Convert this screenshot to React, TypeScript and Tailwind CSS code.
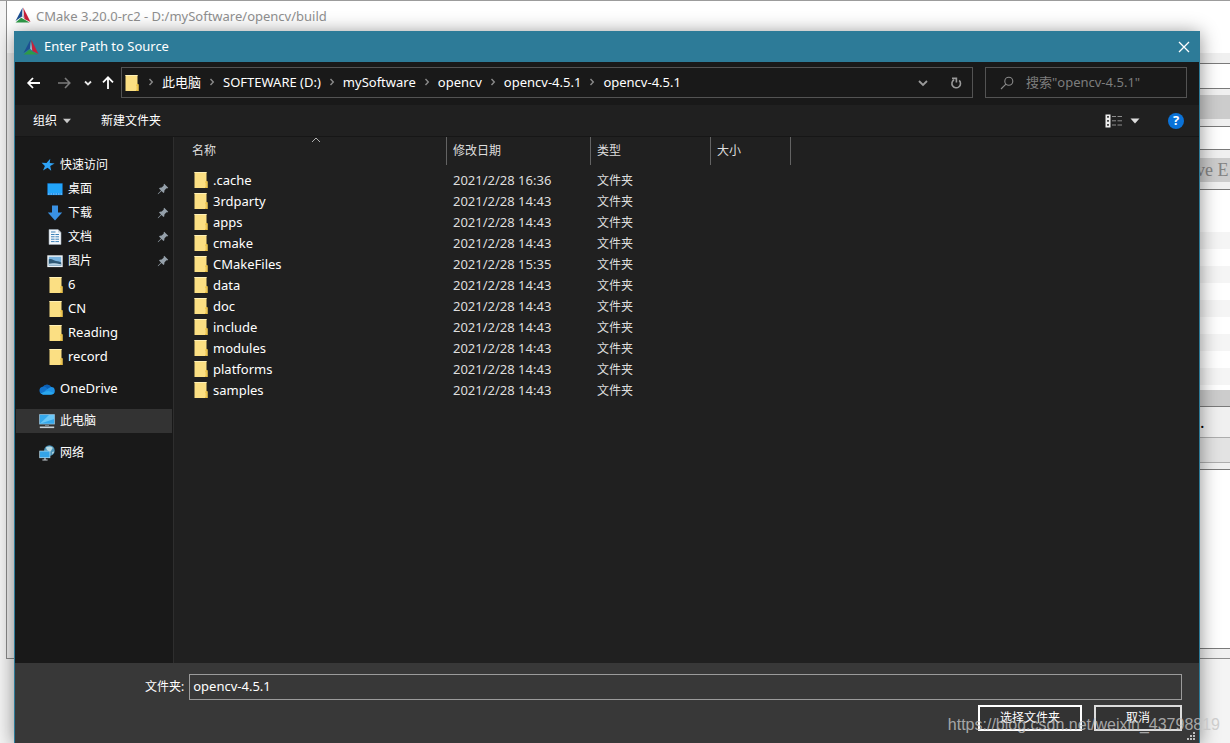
import { Fragment, type ReactNode } from "react";

const folders = [
  { name: ".cache", date: "2021/2/28 16:36" },
  { name: "3rdparty", date: "2021/2/28 14:43" },
  { name: "apps", date: "2021/2/28 14:43" },
  { name: "cmake", date: "2021/2/28 14:43" },
  { name: "CMakeFiles", date: "2021/2/28 15:35" },
  { name: "data", date: "2021/2/28 14:43" },
  { name: "doc", date: "2021/2/28 14:43" },
  { name: "include", date: "2021/2/28 14:43" },
  { name: "modules", date: "2021/2/28 14:43" },
  { name: "platforms", date: "2021/2/28 14:43" },
  { name: "samples", date: "2021/2/28 14:43" },
];

const crumbs = [
  "此电脑",
  "SOFTEWARE (D:)",
  "mySoftware",
  "opencv",
  "opencv-4.5.1",
  "opencv-4.5.1",
];

function CMakeLogo() {
  return (
    <svg viewBox="0 0 16 16" className="size-4 shrink-0">
      <path d="M7.6 0.5 L0.5 14 L7 9.6 Z" fill="#1d4f91" />
      <path d="M8.2 0.5 L15.5 15 L9.4 12 Z" fill="#c8203a" />
      <path d="M0.5 15.5 L6.2 10.8 L14.6 15.5 Z" fill="#2e9a48" />
      <path d="M7.9 2.5 L7.2 9.8 L9.2 11.6 Z" fill="#aebccb" />
    </svg>
  );
}

function FolderIcon() {
  return (
    <svg viewBox="0 0 14 16" className="h-4 w-3.5 shrink-0">
      <path d="M0.5 0 H12.5 V9 L13.5 9.5 V16 H0.5 Z" fill="#fbdf83" />
      <path d="M0.5 0 H12.5 V1 H0.5 Z" fill="#fff0b5" />
      <path d="M11 16 V10 L12.5 8.8 L13.5 9.5 V16 Z" fill="#e9bd3f" />
      <path d="M11.8 15 V10.5" stroke="#fdeaa0" strokeWidth="0.7" />
    </svg>
  );
}

function StarIcon() {
  return (
    <svg viewBox="0 0 16 16" className="size-4 shrink-0">
      <path
        d="M11.3 1.8 L10.7 6.1 L15.6 6.6 L11.2 9 L12.2 13.8 L8.6 10.7 L4 13.6 L5.9 9 L2.6 5.8 L7.5 6 Z"
        fill="#2ea3f7"
      />
    </svg>
  );
}

function DesktopIcon() {
  return (
    <svg viewBox="0 0 16 16" className="size-4 shrink-0">
      <rect x="0.4" y="2.3" width="15.2" height="11.8" fill="#1b8fee" />
      <rect x="1" y="3" width="14" height="9" fill="#22a5fb" />
      <path d="M1 13 H15" stroke="#8fd1ff" strokeWidth="1" strokeDasharray="1.5 1" />
    </svg>
  );
}

function DownloadIcon() {
  return (
    <svg viewBox="0 0 16 16" className="size-4 shrink-0">
      <path d="M5 0.5 H11 V7.5 H15.2 L8 15.5 L0.8 7.5 H5 Z" fill="#3a92e4" />
    </svg>
  );
}

function DocumentIcon() {
  return (
    <svg viewBox="0 0 16 16" className="size-4 shrink-0">
      <path d="M2 0.5 H11 L14 3.5 V15.5 H2 Z" fill="#f4f8fb" stroke="#9aa9b5" strokeWidth="0.6" />
      <path d="M11 0.5 V3.5 H14" fill="#c3d0da" />
      <path d="M4 5.5 H12 M4 7.8 H12 M4 10.2 H12 M4 12.6 H12" stroke="#3c82b8" />
      <path d="M4 3 H8.5" stroke="#3c82b8" />
      <path d="M8 5 V13" stroke="#f4f8fb" strokeWidth="0.8" />
    </svg>
  );
}

function PictureIcon() {
  return (
    <svg viewBox="0 0 16 16" className="size-4 shrink-0">
      <rect x="0.3" y="2.3" width="15.4" height="11.8" fill="#eef3f6" />
      <rect x="1.8" y="3.8" width="12.4" height="8.8" fill="#78b3df" />
      <path d="M1.8 6.5 C5 5 6.5 8 9 8 S13 9 14.2 9.5 V12.6 H1.8 Z" fill="#2f5976" />
      <path d="M1.8 10.8 C5 9.5 10 10.5 14.2 11.2 V12.6 H1.8 Z" fill="#b9d4e6" />
    </svg>
  );
}

function CloudIcon() {
  return (
    <svg viewBox="0 0 16 16" className="size-4 shrink-0">
      <path d="M3.6 6.5 A4.9 4.9 0 0 1 12.4 6 L8 10 Z" fill="#0c5fb3" />
      <path d="M4 13.4 A3.9 3.9 0 0 1 3.6 5.7 C6 5.2 7.5 6.8 8.7 8 L12 13.4 Z" fill="#1273cd" />
      <path d="M11.8 6 A3.7 3.7 0 0 1 12.4 13.4 L3.6 13.4 C5.5 9.5 9 7.5 11.8 6 Z" fill="#1f93e6" />
      <path d="M1.6 12.5 C5 10.8 7.5 9.8 9.5 9.9 L15 12 A3 3 0 0 1 12.4 13.4 H4 Z" fill="#2aa7ee" />
    </svg>
  );
}

function ComputerIcon() {
  return (
    <svg viewBox="0 0 16 16" className="size-4 shrink-0">
      <rect x="0.2" y="1.2" width="15.6" height="10.2" fill="#9ec7e0" />
      <rect x="0.9" y="1.9" width="14.2" height="8.8" fill="#36a9ec" />
      <path d="M0.9 10.7 L10 1.9 H15.1 V6 Z" fill="#6cc8f7" />
      <path d="M6 12.4 H10" stroke="#7d8c96" />
      <path d="M0.8 14.3 H15.2" stroke="#c7d0d6" strokeWidth="1.6" />
    </svg>
  );
}

function NetworkIcon() {
  return (
    <svg viewBox="0 0 16 16" className="size-4 shrink-0">
      <circle cx="10.4" cy="5.6" r="5.3" fill="#4b93b8" />
      <path d="M7 2.2 C10 1 12.5 1.2 13.8 3 C12.5 4.2 12.6 6 11.3 6.4 C9 6 7 5 7 2.2 Z" fill="#b8dbe4" />
      <path d="M13.2 7 L15.3 6.5 L13.5 9.5 Z" fill="#c6e2e8" />
      <rect x="0.3" y="5.7" width="11" height="7.4" fill="#b4d9ec" />
      <rect x="1" y="6.4" width="9.6" height="6" fill="#35a4e8" />
      <path d="M3.4 15 H8.6 M6 13 V15" stroke="#c7d0d6" strokeWidth="1.2" />
    </svg>
  );
}

function PinIcon() {
  return (
    <svg viewBox="0 0 12 12" className="size-3 shrink-0">
      <path
        d="M7.2 0.8 L11.2 4.8 L10.2 5.4 L9.4 5.2 L7.4 7.4 L7.3 9.3 L6.5 10 L4.5 7.9 L1.4 11 L0.8 11.2 L1 10.6 L4 7.5 L2 5.5 L2.8 4.7 L4.7 4.6 L6.8 2.6 L6.6 1.7 Z"
        fill="#95a0aa"
      />
    </svg>
  );
}

function Chevron() {
  return (
    <svg viewBox="0 0 22 10" className="h-2.5 w-[22px] shrink-0">
      <path d="M9.5 2 L12.3 5 L9.5 8" fill="none" stroke="#8a8a8a" strokeWidth="1.4" />
    </svg>
  );
}

type SideItemProps = {
  icon: ReactNode;
  label: string;
  latin?: boolean;
  nested?: boolean;
  pinned?: boolean;
  active?: boolean;
};

function SideItem({ icon, label, latin, nested, pinned, active }: SideItemProps) {
  return (
    <li className="h-6 px-px">
      <a
        href="#"
        className={`flex h-6 items-center gap-[5px] pr-[3px] ${nested ? "pl-[31px]" : "pl-[23px]"} ${active ? "bg-[#333333]" : ""}`}
      >
        {icon}
        <span className={`flex-1 whitespace-nowrap ${latin ? "text-[13px]" : "text-xs"}`}>
          {label}
        </span>
        {pinned && <PinIcon />}
      </a>
    </li>
  );
}

/* Main CMake window, mostly covered by the dialog */
function CMakeWindow() {
  return (
    <div className="absolute left-1.5 right-0 top-0 border-b border-l border-[#8c8c8c] bg-[#f0f0f0]">
      <div className="flex h-[52px] items-start gap-[5px] bg-white pl-2 pt-1.5 text-[13px] leading-[18px] text-[#8f8f8f]">
        <CMakeLogo />
        <span>CMake 3.20.0-rc2 - D:/mySoftware/opencv/build</span>
      </div>
      <div className="pl-8 pt-2.5">
        <div className="h-[26px] border-y border-[#7a7a7a] bg-white" />
        <div className="mt-1.5 h-6 bg-[#cccccc]" />
        <div className="mt-[7px] h-6 border-y border-[#7a7a7a] bg-white" />
        <div className="mt-2 flex h-6 items-center justify-end bg-[#cccccc]">
          <span className="w-[34px] whitespace-pre font-['Liberation_Serif',serif] text-lg text-[#838383]">
            ve E
          </span>
        </div>
        <div className="mt-[7px] border-t border-[#7a7a7a] bg-white pb-[5px] pt-[42px]">
          <div className="h-[17px] bg-[#f5f5f5]" />
          <div className="mt-[17px] h-[17px] bg-[#f5f5f5]" />
          <div className="mt-[17px] h-[17px] bg-[#f5f5f5]" />
          <div className="mt-[17px] h-[17px] bg-[#f5f5f5]" />
          <div className="mt-[17px] h-[17px] bg-[#f5f5f5]" />
        </div>
        <div className="h-4 bg-[#cccccc]" />
        <div className="flex h-8 items-center justify-end border-y border-b-[#adadad] border-t-[#7a7a7a]">
          <span className="w-[30px] font-['Liberation_Serif',serif] text-lg leading-none text-black">.</span>
        </div>
        <div className="h-[25px] border-b border-[#adadad] bg-[#e3e3e3]" />
        <div className="mt-1.5 h-[180px] border-y border-[#7a7a7a] bg-white" />
        <div className="h-[9px]" />
      </div>
    </div>
  );
}

function AddressBar() {
  return (
    <div className="flex h-[43px] items-start bg-[#191919] pl-[11px] pr-3 pt-[5px]">
      <div className="flex h-[31px] items-center">
        <button aria-label="后退" className="w-4">
          <svg viewBox="0 0 16 16" className="size-4" fill="none" stroke="#ffffff" strokeWidth="1.8">
            <path d="M2.5 8 H14 M7 3 L2.2 8 L7 13" />
          </svg>
        </button>
        <button aria-label="前进" className="ml-3.5 w-4">
          <svg viewBox="0 0 16 16" className="size-4" fill="none" stroke="#7b7b7b" strokeWidth="1.6">
            <path d="M2 8 H13.5 M9 3 L13.8 8 L9 13" />
          </svg>
        </button>
        <button aria-label="最近浏览的位置" className="ml-2.5 w-3">
          <svg viewBox="0 0 12 12" className="size-3" fill="none" stroke="#e6e6e6" strokeWidth="1.8">
            <path d="M3 4.5 L6 7.5 L9 4.5" />
          </svg>
        </button>
        <button aria-label="上移" className="ml-1.5 w-4">
          <svg viewBox="0 0 16 16" className="size-4" fill="none" stroke="#ffffff" strokeWidth="1.8">
            <path d="M8 14 V2.5 M3 7.3 L8 2.3 L13 7.3" />
          </svg>
        </button>
      </div>
      <div className="ml-[5px] flex h-[31px] min-w-0 flex-1 items-center border border-[#535353] pl-[3px]">
        <FolderIcon />
        <nav className="flex flex-1 items-center pb-0.5 pl-px">
          {crumbs.map((crumb, i) => (
            <Fragment key={i}>
              <Chevron />
              <a href="#" className="whitespace-nowrap text-[13px] leading-5">
                {crumb}
              </a>
            </Fragment>
          ))}
        </nav>
        <button aria-label="以前的位置" className="w-8">
          <svg viewBox="0 0 12 12" className="mx-auto size-3" fill="none" stroke="#9a9a9a" strokeWidth="1.8">
            <path d="M2 4 L6 8 L10 4" />
          </svg>
        </button>
        <button aria-label="刷新" className="w-[33px]">
          <svg viewBox="0 0 14 14" className="mx-auto size-3.5" fill="none" stroke="#9a9a9a" strokeWidth="1.6">
            <path d="M10.2 4.4 A4.3 4.3 0 1 1 5 3.8" />
            <path d="M3 2.4 H7.4 V6.4" />
          </svg>
        </button>
      </div>
      <label className="ml-3 flex h-[31px] w-[202px] shrink-0 items-center border border-[#535353] pl-3.5">
        <svg viewBox="0 0 14 14" className="size-3.5 shrink-0" fill="none" stroke="#8a8a8a" strokeWidth="1.1">
          <circle cx="8.8" cy="5.2" r="4" />
          <path d="M5.9 8.1 L1 13" />
        </svg>
        <input
          type="text"
          aria-label="搜索"
          placeholder={'搜索"opencv-4.5.1"'}
          className="ml-3 w-full min-w-0 bg-transparent text-[13px] outline-none placeholder:text-[#7d7d7d]"
        />
      </label>
    </div>
  );
}

function Toolbar() {
  return (
    <div className="flex h-8 items-center border-b border-[#161616] bg-[#202020] pl-[18px] pr-[15px] text-xs">
      <button className="flex items-center gap-[5px]">
        组织
        <svg viewBox="0 0 10 6" className="h-1.5 w-2.5" fill="#c9c9c9">
          <path d="M1 0.8 H9 L5 5.2 Z" />
        </svg>
      </button>
      <button className="ml-[29px]">新建文件夹</button>
      <button aria-label="更改视图" className="ml-auto flex items-center gap-[7px]">
        <svg viewBox="0 0 18 14" className="h-3.5 w-[18px]">
          <path d="M0.5 0.5 H5.5 V13.5 H0.5 Z" fill="#f0f0f0" />
          <path d="M2 2 H4 V3.8 H2 Z M2 6 H4 V7.8 H2 Z M2 10 H4 V11.8 H2 Z" fill="#4a4a4a" />
          <path
            d="M7 2.5 H11 M12.5 2.5 H17 M7 6.8 H11 M12.5 6.8 H17 M7 11 H11 M12.5 11 H17"
            stroke="#8d8d8d"
          />
        </svg>
        <svg viewBox="0 0 10 6" className="h-1.5 w-2.5" fill="#dddddd">
          <path d="M0.5 0.5 H9.5 L5 5.5 Z" />
        </svg>
      </button>
      <button
        aria-label="获取帮助"
        className="ml-7 flex size-4 items-center justify-center rounded-full bg-[#0a72d8] font-['Open_Sans',sans-serif] text-[13px] font-bold leading-none"
      >
        ?
      </button>
    </div>
  );
}

function Sidebar() {
  return (
    <aside className="w-[159px] shrink-0 border-r border-[#2e2e2e] bg-[#191919] pt-4">
      <ul>
        <SideItem icon={<StarIcon />} label="快速访问" />
        <SideItem nested pinned icon={<DesktopIcon />} label="桌面" />
        <SideItem nested pinned icon={<DownloadIcon />} label="下载" />
        <SideItem nested pinned icon={<DocumentIcon />} label="文档" />
        <SideItem nested pinned icon={<PictureIcon />} label="图片" />
        <SideItem nested latin icon={<span className="pl-0.5"><FolderIcon /></span>} label="6" />
        <SideItem nested latin icon={<span className="pl-0.5"><FolderIcon /></span>} label="CN" />
        <SideItem nested latin icon={<span className="pl-0.5"><FolderIcon /></span>} label="Reading" />
        <SideItem nested latin icon={<span className="pl-0.5"><FolderIcon /></span>} label="record" />
      </ul>
      <ul className="mt-2 space-y-2">
        <SideItem latin icon={<CloudIcon />} label="OneDrive" />
        <SideItem active icon={<ComputerIcon />} label="此电脑" />
        <SideItem icon={<NetworkIcon />} label="网络" />
      </ul>
    </aside>
  );
}

function FileTable() {
  return (
    <div className="min-w-0 flex-1 bg-[#202020] pl-3">
      <table className="w-[605px] table-fixed border-separate border-spacing-0 text-left">
        <colgroup>
          <col className="w-[261px]" />
          <col className="w-36" />
          <col className="w-[120px]" />
          <col className="w-20" />
        </colgroup>
        <thead>
          <tr className="h-7 text-xs text-[#dedede]">
            <th className="relative border-r border-[#636363] p-0 pl-1.5 font-normal">
              名称
              <svg
                viewBox="0 0 10 6"
                className="absolute left-1/2 top-0 h-1.5 w-2.5 -translate-x-1/2"
                fill="none"
                stroke="#b0b0b0"
              >
                <path d="M1 5 L5 1 L9 5" />
              </svg>
            </th>
            <th className="border-r border-[#636363] p-0 pl-1.5 font-normal">修改日期</th>
            <th className="border-r border-[#636363] p-0 pl-1.5 font-normal">类型</th>
            <th className="border-r border-[#636363] p-0 pl-1.5 font-normal">大小</th>
          </tr>
        </thead>
        <tbody className="text-[13px] leading-5 before:block before:h-1">
          {folders.map((folder) => (
            <tr key={folder.name} className="h-[21px]">
              <td className="p-0 pl-2">
                <div className="flex items-center gap-[5px]">
                  <FolderIcon />
                  <span>{folder.name}</span>
                </div>
              </td>
              <td className="p-0 pl-1.5 text-[#dedede]">{folder.date}</td>
              <td className="p-0 pl-1.5 pt-0.5 text-xs text-[#dedede]">文件夹</td>
              <td className="p-0" />
            </tr>
          ))}
        </tbody>
      </table>
    </div>
  );
}

function Footer() {
  return (
    <div className="relative h-20 shrink-0 bg-[#383838] pl-[130px] pr-[17px] pt-[11px] text-xs">
      <div className="flex items-center gap-[5px]">
        <label htmlFor="folder-name" className="whitespace-nowrap">
          文件夹:
        </label>
        <input
          id="folder-name"
          type="text"
          defaultValue="opencv-4.5.1"
          className="h-[26px] min-w-0 flex-1 border border-[#9b9b9b] bg-[#383838] px-[3px] pb-0.5 text-[13px] outline-none"
        />
      </div>
      <div className="mt-[5px] flex justify-end gap-3">
        <button className="h-[26px] w-[104px] border-2 border-white bg-[#333333]">选择文件夹</button>
        <button className="h-[26px] w-[88px] border-2 border-[#dcdcdc] bg-[#333333]">取消</button>
      </div>
      <svg viewBox="0 0 9 9" className="absolute bottom-0.5 right-[3px] size-[9px]" fill="#bdbdbd">
        <path d="M6 0 H8 V2 H6 Z M3 3 H5 V5 H3 Z M6 3 H8 V5 H6 Z M0 6 H2 V8 H0 Z M3 6 H5 V8 H3 Z M6 6 H8 V8 H6 Z" />
      </svg>
    </div>
  );
}

export default function App() {
  return (
    <div className="relative h-screen overflow-hidden border-t border-[#9c9c9c] bg-[#f4f4f4] font-['Noto_Sans','Noto_Sans_CJK_SC',sans-serif]">
      <CMakeWindow />

      <div className="absolute bottom-0 left-3.5 right-[30px] top-[30px] flex flex-col border-x border-[#2d7b98] text-white shadow-[0_2px_18px_rgba(0,0,0,0.45)]">
        <div className="flex h-[31px] shrink-0 items-center gap-[5px] bg-[#2d7b98] pl-2 pr-[9px] text-[13px]">
          <CMakeLogo />
          <h1 className="flex-1">Enter Path to Source</h1>
          <button aria-label="关闭">
            <svg viewBox="0 0 12 12" className="size-3" fill="none" stroke="#ffffff" strokeWidth="1.3">
              <path d="M1 1 L11 11 M11 1 L1 11" />
            </svg>
          </button>
        </div>
        <AddressBar />
        <Toolbar />
        <div className="flex min-h-0 flex-1">
          <Sidebar />
          <FileTable />
        </div>
        <Footer />
      </div>

      <div className="pointer-events-none absolute bottom-2 right-2.5 font-['Liberation_Sans',sans-serif] text-base leading-5 text-[#c4c4c4]/80">
        https://blog.csdn.net/weixin_43798819
      </div>
    </div>
  );
}
